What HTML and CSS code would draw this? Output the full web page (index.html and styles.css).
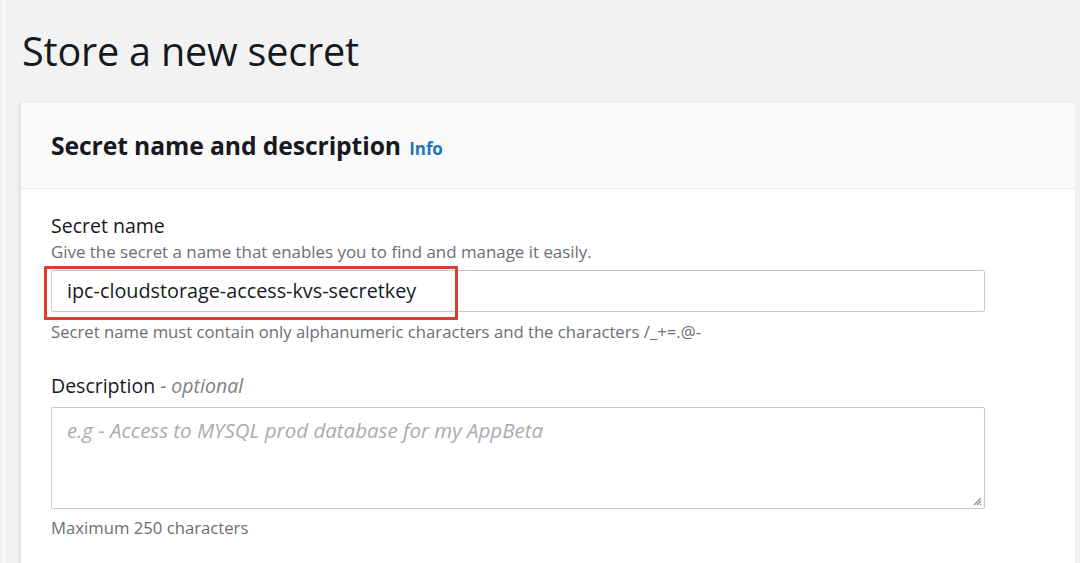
FILE: index.html
```html
<!DOCTYPE html>
<html>
<head>
<meta charset="utf-8">
<link rel="stylesheet" href="styles.css">
</head>
<body>
<div class="page">
  <h1 class="title">Store a new secret</h1>
  <section class="card">
    <header class="card-head">
      <h2 class="card-title">Secret name and description <a class="info">Info</a></h2>
    </header>
    <div class="card-body">
      <div class="field">
        <div class="label">Secret name</div>
        <div class="hint">Give the secret a name that enables you to find and manage it easily.</div>
        <div class="input-wrap">
          <div class="input">ipc-cloudstorage-access-kvs-secretkey</div>
          <div class="highlight"></div>
        </div>
        <div class="constraint">Secret name must contain only alphanumeric characters and the characters /_+=.@-</div>
      </div>
      <div class="field field-desc">
        <div class="label">Description <span class="optional">- optional</span></div>
        <div class="textarea">
          <span class="placeholder">e.g - Access to MYSQL prod database for my AppBeta</span>
          <svg class="grip" width="10" height="10" viewBox="0 0 10 10"><path d="M9 2 L2 9 M9 5 L5 9 M9 8 L8 9" stroke="#8d8d8d" stroke-width="1.2" fill="none"/></svg>
        </div>
        <div class="constraint">Maximum 250 characters</div>
      </div>
    </div>
  </section>
</div>
</body>
</html>
```

FILE: styles.css
```css
html, body {
  margin: 0;
  padding: 0;
}
body {
  background: #f2f2f2;
  font-family: "Open Sans", "Noto Sans", sans-serif;
  color: #16191f;
  width: 1080px;
  height: 563px;
  overflow: hidden;
}
.page {
  padding: 0 5px 0 13px;
  border-left: 3px solid #f8f8f8;
  margin-left: 2px;
  height: 563px;
  box-sizing: border-box;
}
.title {
  margin: 0;
  padding: 27px 0 0 4px;
  height: 76px;
  font-size: 39.6px;
  font-weight: 400;
  line-height: 48px;
  letter-spacing: -0.2px;
  color: #16191f;
}
.card {
  background: #fff;
  border-left: 3px solid #e4e4e4;
  height: 460px;
  box-shadow: 0 0 1px #e0e0e0;
}
.card-head {
  background: #fafafa;
  height: 85px;
  border-bottom: 1px solid #ececec;
  display: flex;
  align-items: center;
  padding-left: 30px;
}
.card-title {
  margin: 0;
  font-size: 24.7px;
  font-weight: 700;
  color: #16191f;
  letter-spacing: -0.1px;
}
.info {
  color: #1d76b7;
  font-size: 17px;
  font-weight: 700;
  margin-left: 2px;
}
.card-body {
  padding: 25px 0 0 30px;
  width: 934px;
}
.label {
  font-size: 19.5px;
  line-height: 24px;
  color: #16191f;
}
.hint {
  font-size: 16.9px;
  line-height: 20px;
  color: #6b6f73;
  margin-top: 4px;
}
.input-wrap {
  position: relative;
  margin-top: 8px;
}
.input {
  height: 42px;
  border: 1px solid #c8c8c8;
  border-radius: 2px;
  box-sizing: border-box;
  padding-left: 15px;
  font-size: 19.8px;
  line-height: 40px;
  color: #16191f;
  background: #fff;
}
.highlight {
  position: absolute;
  left: -7px;
  top: -4px;
  width: 414px;
  height: 54px;
  border: 3px solid #d6402f;
  box-sizing: border-box;
  border-radius: 1px;
}
.constraint {
  font-size: 16.7px;
  line-height: 20px;
  color: #6b6f73;
  margin-top: 10px;
}
.field-desc {
  margin-top: 32px;
}
.optional {
  font-style: italic;
  color: #7d8185;
}
.textarea {
  position: relative;
  margin-top: 9px;
  height: 102px;
  border: 1px solid #c8c8c8;
  border-radius: 2px;
  box-sizing: border-box;
  padding: 10px 15px;
  background: #fff;
}
.placeholder {
  font-size: 20.5px;
  font-style: italic;
  color: #a9acaf;
  line-height: 24px;
}
.grip {
  position: absolute;
  right: 2px;
  bottom: 2px;
}
.field-desc .constraint {
  margin-top: 9px;
}
```
